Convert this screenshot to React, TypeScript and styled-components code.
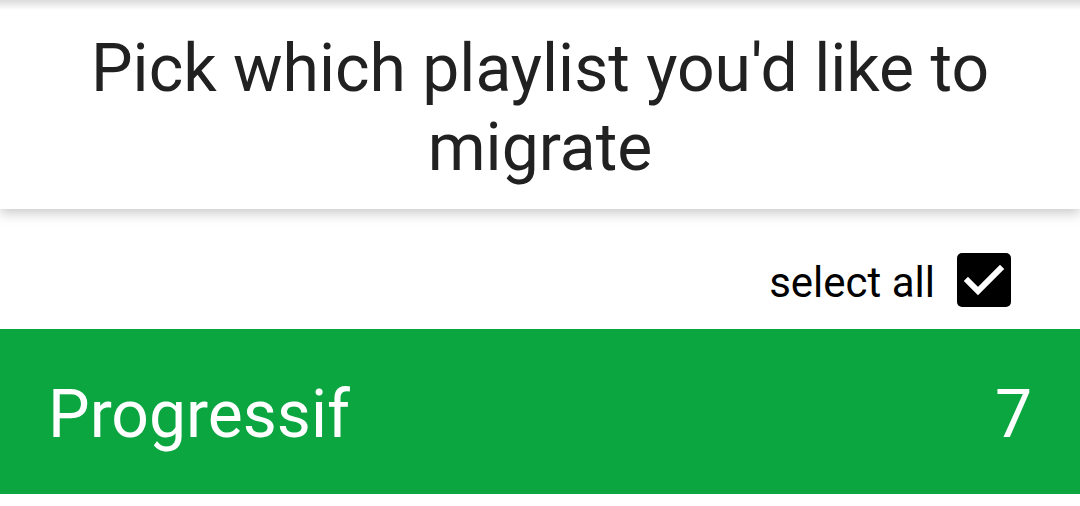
import styled, { createGlobalStyle } from 'styled-components';

const GlobalStyle = createGlobalStyle`
  html, body {
    margin: 0;
    padding: 0;
    background: #ffffff;
    font-family: Roboto, "Liberation Sans", sans-serif;
  }
`;

const App = () => {
  return (
    <Page>
      <GlobalStyle />
      <TopShade />
      <Header>
        <Title>Pick which playlist you'd like to migrate</Title>
      </Header>

      <SelectRow>
        <SelectLabel>select all</SelectLabel>
        <CheckBox>
          <svg width="44" height="36" viewBox="0 0 44 36">
            <path d="M6 19 L16 29 L38 7" fill="none" stroke="#fff" strokeWidth="6" strokeLinecap="square" />
          </svg>
        </CheckBox>
      </SelectRow>

      <PlaylistRow>
        <PlaylistName>Progressif</PlaylistName>
        <TrackCount>7</TrackCount>
      </PlaylistRow>
    </Page>
  );
};

export default App;

const Page = styled.div`
  width: 1080px;
  height: 506px;
  overflow: hidden;
  position: relative;
  background: #fff;
`;

const TopShade = styled.div`
  position: absolute;
  top: 0;
  left: 0;
  right: 0;
  height: 10px;
  background: linear-gradient(to bottom, rgba(0, 0, 0, 0.14), rgba(0, 0, 0, 0));
  z-index: 2;
`;

const Header = styled.header`
  position: relative;
  z-index: 1;
  height: 209px;
  background: #fff;
  box-shadow: 0 4px 12px rgba(0, 0, 0, 0.22);
  display: flex;
  align-items: center;
  justify-content: center;
  padding: 0 40px;
  box-sizing: border-box;
`;

const Title = styled.h1`
  margin: 0;
  padding-top: 6px;
  font-size: 66px;
  font-weight: 400;
  line-height: 79px;
  text-align: center;
  color: #212121;
`;

const SelectRow = styled.div`
  display: flex;
  align-items: center;
  justify-content: flex-end;
  gap: 22px;
  height: 120px;
  box-sizing: border-box;
  padding: 22px 69px 0 0;
`;

const SelectLabel = styled.span`
  font-size: 42px;
  color: #000;
  padding-top: 4px;
`;

const CheckBox = styled.div`
  width: 54px;
  height: 54px;
  border-radius: 5px;
  background: #000;
  display: flex;
  align-items: center;
  justify-content: center;
`;

const PlaylistRow = styled.div`
  display: flex;
  align-items: center;
  justify-content: space-between;
  height: 165px;
  box-sizing: border-box;
  padding: 6px 48px 0;
  background: #0ba640;
  color: #fff;
`;

const PlaylistName = styled.span`
  font-size: 66px;
`;

const TrackCount = styled.span`
  font-size: 66px;
`;
